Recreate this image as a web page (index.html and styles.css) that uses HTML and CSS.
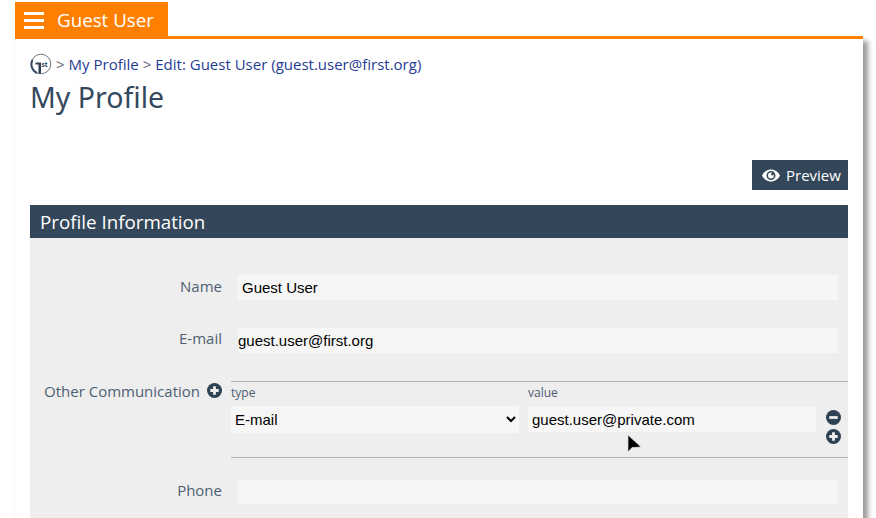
FILE: index.html
```html
<!DOCTYPE html>
<html lang="en">
<head>
<meta charset="utf-8">
<title>My Profile</title>
<link rel="stylesheet" href="styles.css">
</head>
<body>
<header class="tab">
  <span class="burger"><i></i><i></i><i></i></span>
  <span class="tab-title">Guest User</span>
</header>
<main class="panel">
  <nav class="crumbs">
    <svg class="logo" width="22" height="22" viewBox="0 0 22 22">
      <circle cx="11" cy="11" r="9.800" fill="none" stroke="#6a7785" stroke-width="1"/>
      <path d="M2.500 7A9.500 9.500 0 0 0 7 20" fill="none" stroke="#34495e" stroke-width="2"/>
      <path d="M5.500 9.500h5.500v11H8.500V11.500H5.500z" fill="#2c3e50"/>
      <text x="11.500" y="14" class="logo-text">st</text>
    </svg>
    <span class="sep">&gt;</span> <a href="#">My Profile</a> <span class="sep">&gt;</span> <a href="#">Edit: Guest User (guest.user@first.org)</a>
  </nav>
  <h1>My Profile</h1>
  <div class="actions">
    <button class="preview" type="button">
      <svg width="18" height="13" viewBox="0 0 18 13"><path fill="#fff" fill-rule="evenodd" d="M9 .5C5 .5 1.700 2.900 0 6.500c1.700 3.600 5 6 9 6s7.300-2.400 9-6C16.300 2.900 13 .5 9 .5zm0 10.500a4.500 4.500 0 1 1 0-9 4.500 4.500 0 0 1 0 9zm0-7.500a3 3 0 1 0 3 3c0-.5-.1-.9-.3-1.300a1.300 1.300 0 1 1-1.400-1.400A3 3 0 0 0 9 3.500z"/></svg>
      <span>Preview</span>
    </button>
  </div>
  <section class="card">
    <h2>Profile Information</h2>
    <div class="body">
      <div class="row first">
        <label>Name</label>
        <input class="field pad" type="text" value="Guest User">
      </div>
      <div class="row second">
        <label>E-mail</label>
        <input class="field" type="text" value="guest.user@first.org">
      </div>
      <div class="comm">
        <div class="comm-label">
          <span>Other Communication</span>
          <svg class="circ" width="15" height="15" viewBox="0 0 16 16"><circle cx="8" cy="8" r="8" fill="#2f4254"/><path d="M3.500 8h9M8 3.500v9" stroke="#eee" stroke-width="3"/></svg>
        </div>
        <div class="comm-table">
          <div class="heads"><span>type</span><span>value</span></div>
          <div class="comm-row">
            <select class="sel"><option>E-mail</option></select>
            <input class="val" type="text" value="guest.user@private.com">
            <div class="btns">
              <svg class="circ" width="15" height="15" viewBox="0 0 16 16"><circle cx="8" cy="8" r="8" fill="#2f4254"/><path d="M3.500 8h9" stroke="#eee" stroke-width="3"/></svg>
              <svg class="circ" width="15" height="15" viewBox="0 0 16 16"><circle cx="8" cy="8" r="8" fill="#2f4254"/><path d="M3.500 8h9M8 3.500v9" stroke="#eee" stroke-width="3"/></svg>
            </div>
          </div>
        </div>
      </div>
      <div class="row third">
        <label>Phone</label>
        <input class="field" type="text">
      </div>
    </div>
  </section>
</main>
<svg class="cursor" width="16" height="22" viewBox="0 0 16 22"><path d="M1 1v17l4-4.500 9-.5z" fill="#000" stroke="#ddd" stroke-width=".7"/></svg>
</body>
</html>
```
FILE: styles.css
```css
html, body { margin: 0; padding: 0; height: 100%; overflow: hidden; background: #fff; }
body { padding: 2px 13px 0 15px; box-sizing: border-box; font-family: "Open Sans", sans-serif; color: #4d6072; position: relative; }
.tab { width: 153px; height: 34px; background: #ff8000; display: flex; align-items: center; color: #fff; }
.burger { display: flex; flex-direction: column; gap: 4px; margin: 3px 0 0 9px; width: 20px; }
.burger i { display: block; height: 3px; background: #fff; }
.tab-title { font-size: 18.750px; margin-left: 13px; }
.panel { border-top: 3px solid #ff8000; background: #fff; box-shadow: 5px 5px 5px rgba(0,0,0,.4), -1px 0 2px rgba(0,0,0,.04); padding: 0 15px; height: 600px; }
.crumbs { display: flex; align-items: center; gap: 4px; height: 22px; padding-top: 14px; font-size: 15px; white-space: pre; }
.logo { display: block; }
.logo-text { font: bold 6.500px "Open Sans", sans-serif; fill: #2c3e50; }
.crumbs a { color: #1f3c94; text-decoration: none; }
.sep { color: #667; }
h1 { margin: 5px 0 0; font: 400 28.500px/34px "Noto Sans", sans-serif; color: #34495e; }
.actions { display: flex; justify-content: flex-end; margin-top: 46px; }
.preview { width: 96px; height: 30px; border: 0; padding: 0 0 0 10px; display: flex; align-items: center; gap: 6px; background: #34465a; color: #fff; font: 15px "Open Sans", sans-serif; }
.card { margin-top: 15px; background: #eee; height: 400px; }
h2 { margin: 0; height: 33px; background: #34465a; color: #fff; font: 400 18.750px/34px "Open Sans", sans-serif; padding-left: 10px; }
.body { padding: 37px 10px 0 0; }
.row { display: flex; align-items: center; }
.row label { width: 192px; text-align: right; font-size: 15px; line-height: 18px; margin-right: 16px; }
.field { flex: 1; min-width: 0; height: 25px; border: 0; padding: 0; background: #f6f6f6; font: 15px "Liberation Sans", sans-serif; color: #000; outline: 0; box-sizing: border-box; }
.pad { padding-left: 4px; }
.first label { padding-bottom: 3px; }
.second { margin-top: 28px; }
.second label { padding-bottom: 6px; }
.comm { display: flex; margin: 28px -10px 0 0; }
.comm-label { width: 201px; display: flex; justify-content: flex-end; align-items: flex-start; gap: 7px; font-size: 15px; line-height: 20px; height: 20px; }
.circ { display: block; flex: none; }
.comm-label .circ { margin-top: 2px; margin-right: 9px; }
.comm-table { flex: 1; border-top: 1px solid #aeb6c2; border-bottom: 1px solid #aeb6c2; height: 75px; }
.heads { display: flex; font-size: 12px; line-height: 16px; padding-top: 3px; height: 21px; }
.heads span:first-child { width: 297px; }
.comm-row { display: flex; align-items: flex-start; }
.sel { width: 288px; height: 27px; border: 0; background: #f6f6f6; font: 15px "Liberation Sans", sans-serif; color: #000; outline: 0; }
.val { width: 288px; height: 25px; margin: 1px 0 0 9px; border: 0; padding: 0 0 0 4px; box-sizing: border-box; background: #f6f6f6; font: 15px "Liberation Sans", sans-serif; color: #000; outline: 0; }
.btns { margin-left: 10px; display: flex; flex-direction: column; gap: 4px; padding-top: 4px; }
.third { margin-top: 22px; }
.third label { padding-bottom: 4px; }
.third .field { height: 24px; }
.cursor { position: absolute; left: 627px; top: 434px; }
```
